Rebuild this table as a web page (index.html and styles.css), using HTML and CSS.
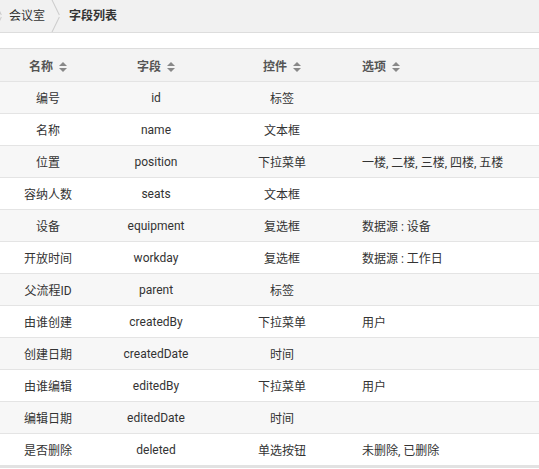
FILE: index.html
```html
<!DOCTYPE html>
<html lang="zh">
<head>
<meta charset="utf-8">
<link rel="stylesheet" href="styles.css">
</head>
<body>
<div class="crumbs">
  <span class="sep sep-first"></span>
  <span class="crumb">会议室</span>
  <span class="sep"></span>
  <span class="crumb current">字段列表</span>
</div>
<div class="strip"></div>
<table class="grid">
  <colgroup>
    <col class="c1"><col class="c2"><col class="c3"><col class="c4">
  </colgroup>
  <thead>
    <tr>
      <th>名称<i class="sort"></i></th>
      <th>字段<i class="sort"></i></th>
      <th>控件<i class="sort"></i></th>
      <th class="left">选项<i class="sort"></i></th>
    </tr>
  </thead>
  <tbody>
    <tr><td>编号</td><td>id</td><td>标签</td><td class="left"></td></tr>
    <tr><td>名称</td><td>name</td><td>文本框</td><td class="left"></td></tr>
    <tr><td>位置</td><td>position</td><td>下拉菜单</td><td class="left">一楼, 二楼, 三楼, 四楼, 五楼</td></tr>
    <tr><td>容纳人数</td><td>seats</td><td>文本框</td><td class="left"></td></tr>
    <tr><td>设备</td><td>equipment</td><td>复选框</td><td class="left">数据源 : 设备</td></tr>
    <tr><td>开放时间</td><td>workday</td><td>复选框</td><td class="left">数据源 : 工作日</td></tr>
    <tr><td>父流程ID</td><td>parent</td><td>标签</td><td class="left"></td></tr>
    <tr><td>由谁创建</td><td>createdBy</td><td>下拉菜单</td><td class="left">用户</td></tr>
    <tr><td>创建日期</td><td>createdDate</td><td>时间</td><td class="left"></td></tr>
    <tr><td>由谁编辑</td><td>editedBy</td><td>下拉菜单</td><td class="left">用户</td></tr>
    <tr><td>编辑日期</td><td>editedDate</td><td>时间</td><td class="left"></td></tr>
    <tr><td>是否删除</td><td>deleted</td><td>单选按钮</td><td class="left">未删除, 已删除</td></tr>
  </tbody>
</table>
</body>
</html>
```
FILE: styles.css
```css
html, body {
  margin: 0;
  padding: 0;
  background: #fff;
  font-family: Roboto, "Noto Sans CJK SC", sans-serif;
  font-size: 12px;
  color: #333;
}
.crumbs {
  height: 32px;
  background: #f1f1f1;
  border-bottom: 1px solid #ddd;
  display: flex;
  align-items: center;
  overflow: hidden;
}
.crumb {
  line-height: 32px;
  padding: 0 6px 0 11px;
}
.crumb.current {
  font-weight: bold;
  color: #333;
  padding-left: 8px;
}
.sep {
  position: relative;
  width: 10px;
  height: 32px;
  flex: none;
}
.sep::before, .sep::after {
  content: "";
  position: absolute;
  left: 0;
  width: 1px;
  height: 18px;
  background: #ccc;
}
.sep::before {
  top: -1px;
  transform-origin: top left;
  transform: rotate(-26deg);
}
.sep::after {
  bottom: -1px;
  transform-origin: bottom left;
  transform: rotate(26deg);
}
.sep-first {
  width: 5px;
  margin-left: -7px;
}
.strip {
  height: 15px;
  border-bottom: 1px solid #ddd;
}
.grid {
  width: 100%;
  border-collapse: collapse;
  table-layout: fixed;
  border-bottom: 3px solid #e2e2e2;
}
.c1 { width: 96px; }
.c2 { width: 120px; }
.c3 { width: 132px; }
th, td {
  height: 31px;
  padding: 0;
  text-align: center;
  white-space: nowrap;
  border-bottom: 1px solid #e4e4e4;
}
th {
  height: 32px;
  background: #f3f3f3;
  color: #555;
  font-weight: bold;
}
.left {
  text-align: left;
  padding-left: 14px;
}
tbody tr:nth-child(odd) td {
  background: #f7f7f7;
}
.sort {
  display: inline-block;
  width: 8px;
  height: 10px;
  margin-left: 6px;
  vertical-align: -1px;
  position: relative;
}
.sort::before, .sort::after {
  content: "";
  position: absolute;
  left: 0;
  border-left: 4px solid transparent;
  border-right: 4px solid transparent;
}
.sort::before {
  top: 0;
  border-bottom: 4px solid #888;
}
.sort::after {
  bottom: 0;
  border-top: 4px solid #888;
}
```
